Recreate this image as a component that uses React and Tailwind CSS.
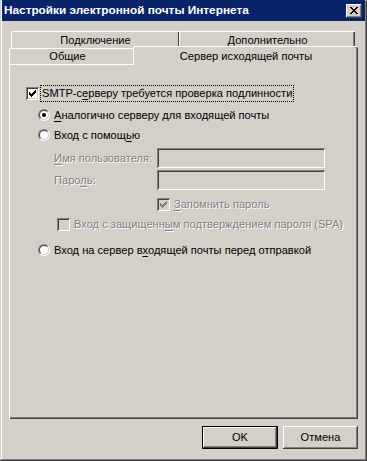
import React from 'react'

const FONT = { fontFamily: '"Liberation Sans", Arial, sans-serif' }

const raised =
  'shadow-[inset_-1px_-1px_#404040,inset_1px_1px_#ffffff,inset_-2px_-2px_#808080,inset_2px_2px_#d4d0c8]'
const sunken =
  'shadow-[inset_1px_1px_#808080,inset_-1px_-1px_#ffffff,inset_2px_2px_#404040,inset_-2px_-2px_#d4d0c8]'

function Check({ checked, disabled }) {
  return (
    <div className={`w-[13px] h-[13px] shrink-0 flex items-center justify-center ${sunken} ${disabled ? 'bg-[#d4d0c8]' : 'bg-white'}`}>
      {checked && (
        <svg width="7" height="7" viewBox="0 0 7 7" shapeRendering="crispEdges">
          <path
            d="M0 2h1v3h-1zM1 3h1v3h-1zM2 4h1v3h-1zM3 3h1v3h-1zM4 2h1v3h-1zM5 1h1v3h-1zM6 0h1v3h-1z"
            fill={disabled ? '#808080' : '#000'}
          />
        </svg>
      )}
    </div>
  )
}

function Radio({ checked }) {
  return (
    <div className="w-[12px] h-[12px] shrink-0 rounded-full border border-t-[#808080] border-l-[#808080] border-b-white border-r-white">
      <div className="w-full h-full rounded-full border border-t-[#404040] border-l-[#404040] border-b-[#d4d0c8] border-r-[#d4d0c8] bg-white flex items-center justify-center">
        {checked && <div className="w-[4px] h-[4px] rounded-full bg-black" />}
      </div>
    </div>
  )
}

function Dim({ children }) {
  return <span className="text-[#808080] [text-shadow:1px_1px_#ffffff]">{children}</span>
}

function U({ children }) {
  return <span className="underline underline-offset-2">{children}</span>
}

function Field() {
  return <div className={`w-[168px] h-[20px] bg-[#d4d0c8] ${sunken}`} />
}

export default function App() {
  return (
    <div className="w-[367px] h-[461px] bg-[#d4d0c8] text-[11.1px] text-black flex flex-col shadow-[inset_-1px_-1px_#404040,inset_1px_1px_#d4d0c8,inset_-2px_-2px_#808080,inset_2px_2px_#ffffff] px-[2px]" style={FONT}>
      {/* title bar */}
      <div className="h-[21px] bg-[#0a246a] flex items-center justify-between pl-[2px] pr-[3px]">
        <span className="text-white font-bold text-[11.8px]">Настройки электронной почты Интернета</span>
        <div className={`w-[16px] h-[14px] bg-[#d4d0c8] flex items-center justify-center ${raised}`}>
          <svg width="8" height="7" viewBox="0 0 8 7" shapeRendering="crispEdges">
            <path d="M0 0h2v1h-2zM6 0h2v1h-2zM1 1h2v1h-2zM5 1h2v1h-2zM2 2h4v1h-4zM3 3h2v1h-2zM2 4h4v1h-4zM1 5h2v1h-2zM5 5h2v1h-2zM0 6h2v1h-2zM6 6h2v1h-2z" fill="#000" />
          </svg>
        </div>
      </div>

      {/* tabs */}
      <div className="mt-[10px] px-[7px] flex flex-col">
        <div className="flex h-[17px] pl-[2px] pr-[3px]">
          <div className="w-[168px] h-full border-t border-l border-white rounded-tl-[2px] shadow-[inset_-1px_0_#404040] flex items-center justify-center">
            Подключение
          </div>
          <div className="flex-1 h-full border-t border-l border-white rounded-tl-[2px] shadow-[inset_-1px_0_#404040,inset_-2px_0_#808080] flex items-center justify-center">
            Дополнительно
          </div>
        </div>
        <div className="flex h-[16px] items-end">
          <div className="w-[124px] h-[16px] border-t border-l border-white rounded-tl-[2px] flex items-center justify-center pr-[8px]">
            Общие
          </div>
          <div className="relative z-10 flex-1 h-[19px] -mb-[1px] bg-[#d4d0c8] border-t border-l border-white rounded-tl-[2px] rounded-tr-[2px] shadow-[inset_-1px_0_#404040,inset_-2px_0_#808080] flex items-start justify-center pt-[1px]">
            Сервер исходящей почты
          </div>
        </div>

        {/* panel */}
        <div className="h-[355px] border-t border-l border-white shadow-[inset_-1px_-1px_#404040,inset_-2px_-2px_#808080] pl-[16px] pt-[21px] flex flex-col">
          <div className="flex items-center h-[14px]">
            <Check checked />
            <span className="ml-[2px] px-[1px] outline outline-1 outline-dotted outline-black leading-[15px]">
              SMTP-с<U>е</U>рверу требуется проверка подлинности
            </span>
          </div>

          <div className="pl-[12px] mt-[8px] flex flex-col">
            <div className="flex items-center h-[14px] gap-[4px]">
              <Radio checked />
              <span><U>А</U>налогично серверу для входящей почты</span>
            </div>
            <div className="flex items-center h-[14px] gap-[4px] mt-[6px]">
              <Radio />
              <span>Вход с помощ<U>ь</U>ю</span>
            </div>

            <div className="pl-[16px] mt-[6px] flex flex-col gap-[2px]">
              <div className="flex items-center">
                <div className="w-[103px]"><Dim><U>И</U>мя пользователя:</Dim></div>
                <Field />
              </div>
              <div className="flex items-center">
                <div className="w-[103px]"><Dim>Паро<U>л</U>ь:</Dim></div>
                <Field />
              </div>
              <div className="flex items-center gap-[4px] ml-[103px] mt-[5px] h-[14px]">
                <Check checked disabled />
                <Dim><U>З</U>апомнить пароль</Dim>
              </div>
              <div className="flex items-center gap-[4px] ml-[3px] mt-[4px] h-[14px]">
                <Check disabled />
                <Dim>Вход с защищенн<U>ы</U>м подтверждением пароля (SPA)</Dim>
              </div>
            </div>

            <div className="flex items-center h-[14px] gap-[4px] mt-[12px]">
              <Radio />
              <span>Вход на сервер в<U>х</U>одящей почты перед отправкой</span>
            </div>
          </div>
        </div>
      </div>

      {/* buttons */}
      <div className="flex justify-end gap-[5px] mt-[7px] pr-[7px]">
        <div className="w-[76px] h-[23px] border border-black flex items-center justify-center">
          <div className={`w-full h-full flex items-center justify-center ${raised}`}>OK</div>
        </div>
        <div className={`w-[75px] h-[23px] flex items-center justify-center ${raised}`}>Отмена</div>
      </div>
    </div>
  )
}
